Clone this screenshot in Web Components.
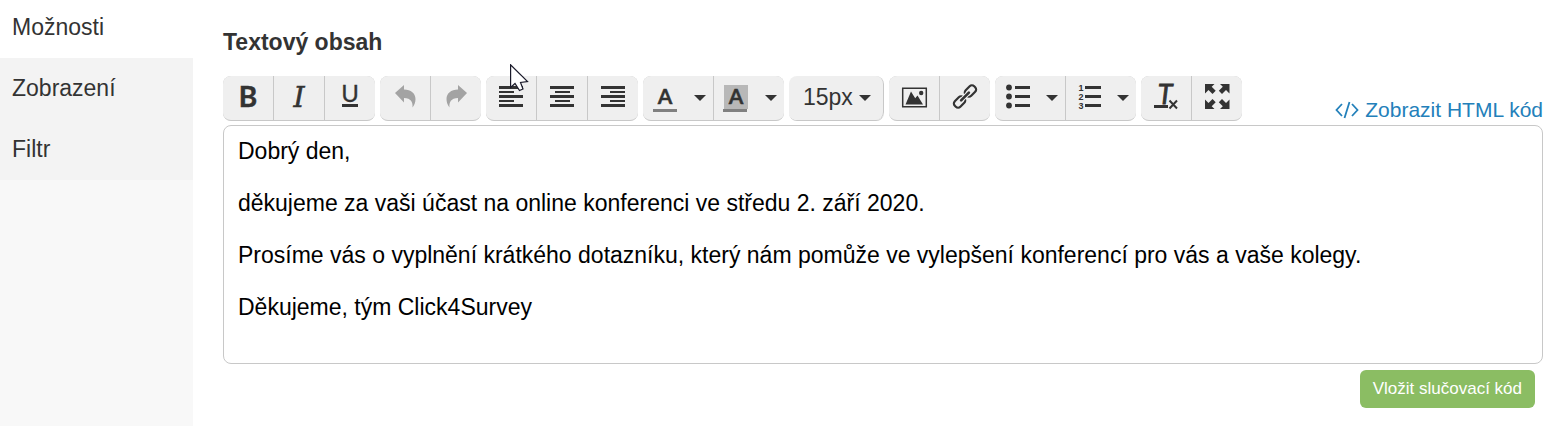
<!DOCTYPE html>
<html lang="cs">
<head>
<meta charset="utf-8">
<meta name="viewport" content="width=device-width, initial-scale=1">
<title>Textový obsah</title>
<style>
    body {
        margin: 0;
        background: #fff;
        color: #333;
        font-family: "Liberation Sans", Arial, sans-serif;
        font-size: 23px;
    }
</style>
</head>
<body>
<survey-settings>
    <side-menu slot="menu">
        <side-item active>Možnosti</side-item>
        <side-item>Zobrazení</side-item>
        <side-item>Filtr</side-item>
    </side-menu>
    <text-editor label="Textový obsah">
        <editor-toolbar slot="toolbar">
            <tool-group>
                <tool-button icon="bold" label="Tučné"></tool-button>
                <tool-button icon="italic" label="Kurzíva"></tool-button>
                <tool-button icon="underline" label="Podtržené"></tool-button>
            </tool-group>
            <tool-group>
                <tool-button icon="undo" label="Zpět" muted></tool-button>
                <tool-button icon="redo" label="Znovu" muted></tool-button>
            </tool-group>
            <tool-group>
                <tool-button icon="left" label="Zarovnat vlevo"></tool-button>
                <tool-button icon="center" label="Zarovnat na střed"></tool-button>
                <tool-button icon="right" label="Zarovnat vpravo"></tool-button>
            </tool-group>
            <tool-group>
                <tool-button icon="color" label="Barva textu" menu></tool-button>
                <tool-button icon="background" label="Barva pozadí" menu></tool-button>
            </tool-group>
            <tool-group>
                <size-select></size-select>
            </tool-group>
            <tool-group>
                <tool-button icon="image" label="Obrázek"></tool-button>
                <tool-button icon="link" label="Odkaz"></tool-button>
            </tool-group>
            <tool-group>
                <tool-button icon="bullets" label="Odrážky" menu></tool-button>
                <tool-button icon="numbers" label="Číslování" menu></tool-button>
            </tool-group>
            <tool-group>
                <tool-button icon="clear" label="Vymazat formát"></tool-button>
                <tool-button icon="expand" label="Celá obrazovka"></tool-button>
            </tool-group>
        </editor-toolbar>
        <code-link slot="code">Zobrazit HTML kód</code-link>
        <p>Dobrý den,</p>
        <p>děkujeme za vaši účast na online konferenci ve středu 2. září 2020.</p>
        <p>Prosíme vás o vyplnění krátkého dotazníku, který nám pomůže ve vylepšení konferencí pro vás a vaše kolegy.</p>
        <p>Děkujeme, tým Click4Survey</p>
        <action-button slot="action">Vložit slučovací kód</action-button>
    </text-editor>
    <mouse-pointer slot="overlay"></mouse-pointer>
</survey-settings>

<script>
const ICONS = {
    bold: `<text x="15" y="25" text-anchor="middle" font-family="Lato" font-weight="700" font-size="28" stroke="currentColor" stroke-width=".5">B</text>`,
    italic: `<text x="15" y="25" text-anchor="middle" font-family="DejaVu Serif" font-style="italic" font-size="28" stroke="currentColor" stroke-width=".6">I</text>`,
    underline: `<text x="15" y="20" text-anchor="middle" font-family="Lato" font-size="24" stroke="currentColor" stroke-width=".3">U</text><path d="M7 22h16v3H7z"/>`,
    undo: `<path d="M5 11 14 3v4.500c7 0 11.500 4 11.500 9.500 0 3-1 6-3 8.500C23 20 21 16.300 14 16v4.500z"/>`,
    redo: `<path d="M26 11 17 3v4.500c-7 0-11.500 4-11.500 9.500 0 3 1 6 3 8.500C8 20 10 16.300 17 16v4.500z"/>`,
    left: `<path d="M3 4h24v3H3zM3 9h15v2H3zM3 13h24v3H3zM3 18h15v2H3zM3 22h24v3H3z"/>`,
    center: `<path d="M3 4h24v3H3zM8 9h15v2H8zM3 13h24v3H3zM8 18h15v2H8zM3 22h24v3H3z"/>`,
    right: `<path d="M3 4h24v3H3zM12 9h15v2H12zM3 13h24v3H3zM12 18h15v2H12zM3 22h24v3H3z"/>`,
    color: `<text x="15" y="22" text-anchor="middle" font-family="Lato" font-weight="700" font-size="21" stroke="currentColor" stroke-width=".4">A</text><path fill="#808080" d="M3 27h24v3H3z"/>`,
    background: `<path fill="#b8b8b8" d="M3 3h24v24H3z"/><text x="15" y="22" text-anchor="middle" font-family="Lato" font-weight="700" font-size="21" stroke="currentColor" stroke-width=".4">A</text><path fill="#808080" d="M2 27h24v3H2z"/>`,
    image: `<path fill="none" stroke="currentColor" stroke-width="1.5" d="M3.7 6.2h23.6v18.6H3.7z"/><path d="M6.5 22.5 12 9.500l4.200 6.700 2.300-2.700 5.500 9z"/><circle cx="22.2" cy="11" r="2.2"/>`,
    link: `<g fill="none" stroke="currentColor" stroke-width="2.2" transform="rotate(-45 15 14.5)"><rect x="1.3" y="10.6" width="12" height="7.8" rx="3.2"/><rect x="16.7" y="10.6" width="12" height="7.8" rx="3.2"/><path d="M10 14.500h10" stroke="#efefef" stroke-width="4.600"/><path d="M9.500 14.500h11" stroke-width="2.600" stroke-linecap="round"/></g>`,
    bullets: `<circle cx="7" cy="5.5" r="2.9"/><circle cx="7" cy="14.5" r="2.9"/><circle cx="7" cy="23.5" r="2.9"/><path d="M13 4h15v3H13zM13 13h15v3H13zM13 22h15v3H13z"/>`,
    numbers: `<g font-family="Liberation Sans" font-weight="700" font-size="9" text-anchor="middle"><text x="8" y="9">1</text><text x="8" y="18">2</text><text x="8" y="27">3</text></g><path d="M12 4h16v3H12zM12 13h16v3H12zM12 22h16v3H12z"/>`,
    clear: `<text x="14" y="22" text-anchor="middle" font-family="Lato" font-style="italic" font-size="27" stroke="currentColor" stroke-width=".8">T</text><path d="M3 23h14v3H3z"/><path fill="none" stroke="currentColor" stroke-width="2" d="m18.500 18.500 7.500 8M26 18.500l-7.500 8"/>`,
    expand: `<path d="M3 2h9.500L9.700 4.800l4 4-3.200 3.200-4-4L3 11.500z"/><path d="M27.500 2H18l2.800 2.800-4 4L20 12l4-4 3.500 3.500z"/><path d="M3 27h9.500l-2.800-2.800 4-4-3.200-3.200-4 4L3 17.500z"/><path d="M27.500 27H18l2.800-2.800-4-4L20 17l4 4 3.500-3.500z"/>`
};

class SurveySettings extends HTMLElement {
    connectedCallback() {
        this.attachShadow({ mode: 'open' });
        this.shadowRoot.innerHTML = `
            <style>
                :host {
                    display: flex;
                    position: relative;
                    min-height: 100vh;
                    overflow: hidden;
                }
            </style>
            <slot name="menu"></slot>
            <slot></slot>
            <slot name="overlay"></slot>
        `;
    }
}
customElements.define('survey-settings', SurveySettings);

class SideMenu extends HTMLElement {
    connectedCallback() {
        this.attachShadow({ mode: 'open' });
        this.shadowRoot.innerHTML = `
            <style>
                :host {
                    display: block;
                    flex: 0 0 193px;
                    background: #f8f8f8;
                }
                nav {
                    display: flex;
                    flex-direction: column;
                    margin-top: -3px;
                }
            </style>
            <nav><slot></slot></nav>
        `;
    }
}
customElements.define('side-menu', SideMenu);

class SideItem extends HTMLElement {
    connectedCallback() {
        this.attachShadow({ mode: 'open' });
        this.shadowRoot.innerHTML = `
            <style>
                :host {
                    display: block;
                    background: #f3f3f3;
                }
                :host([active]) {
                    background: #fff;
                }
                a {
                    display: block;
                    padding: 15px 12px 16px;
                    line-height: 30px;
                    color: #333;
                    text-decoration: none;
                }
            </style>
            <a href="#"><slot></slot></a>
        `;
    }
}
customElements.define('side-item', SideItem);

class TextEditor extends HTMLElement {
    connectedCallback() {
        this.attachShadow({ mode: 'open' });
        this.shadowRoot.innerHTML = `
            <style>
                :host {
                    display: block;
                    flex: 1;
                    min-width: 0;
                    padding: 28px 25px 16px 30px;
                }
                .label {
                    display: block;
                    line-height: 28px;
                    font-weight: bold;
                }
                .bar {
                    display: flex;
                    justify-content: space-between;
                    align-items: flex-end;
                    margin: 20px 0 4px;
                }
                .content {
                    box-sizing: border-box;
                    min-height: 239px;
                    padding: 10px 14px;
                    border: 1px solid #c8c8c8;
                    border-radius: 8px;
                    color: #000;
                    line-height: 30px;
                    outline: none;
                }
                ::slotted(p) {
                    margin: 0 0 22px;
                }
                .actions {
                    display: flex;
                    justify-content: flex-end;
                    padding: 6px 8px 0;
                }
            </style>
            <span class="label" id="label">${this.getAttribute('label')}</span>
            <div class="bar">
                <slot name="toolbar"></slot>
                <slot name="code"></slot>
            </div>
            <div class="content" contenteditable="true" spellcheck="false" role="textbox" aria-multiline="true" aria-labelledby="label"><slot></slot></div>
            <div class="actions"><slot name="action"></slot></div>
        `;
    }
}
customElements.define('text-editor', TextEditor);

class EditorToolbar extends HTMLElement {
    connectedCallback() {
        this.attachShadow({ mode: 'open' });
        this.shadowRoot.innerHTML = `
            <style>
                :host {
                    display: flex;
                    flex-wrap: wrap;
                    gap: 5px;
                }
            </style>
            <slot></slot>
        `;
    }
}
customElements.define('editor-toolbar', EditorToolbar);

class ToolGroup extends HTMLElement {
    connectedCallback() {
        this.attachShadow({ mode: 'open' });
        this.shadowRoot.innerHTML = `
            <style>
                :host {
                    display: flex;
                    gap: 1px;
                    box-sizing: border-box;
                    height: 45px;
                    border-bottom: 1px solid #c8c8c8;
                    border-radius: 8px;
                    background: #c8c8c8;
                    overflow: hidden;
                }
            </style>
            <slot></slot>
        `;
    }
}
customElements.define('tool-group', ToolGroup);

class ToolButton extends HTMLElement {
    connectedCallback() {
        const menu = this.hasAttribute('menu');
        this.attachShadow({ mode: 'open' });
        this.shadowRoot.innerHTML = `
            <style>
                :host {
                    display: flex;
                    background: #efefef;
                    color: #333;
                }
                :host([muted]) {
                    color: #a3a3a3;
                }
                button {
                    display: flex;
                    align-items: center;
                    gap: 14px;
                    padding: 0 10px;
                    border: 0;
                    background: none;
                    color: inherit;
                    cursor: pointer;
                }
                :host([menu]) button {
                    padding: 0 7px;
                }
                svg {
                    display: block;
                    fill: currentColor;
                }
                .icon {
                    margin-bottom: 2px;
                    overflow: visible;
                }
            </style>
            <button type="button" aria-label="${this.getAttribute('label')}">
                <svg class="icon" width="30" height="30" viewBox="0 0 30 30">${ICONS[this.getAttribute('icon')]}</svg>
                ${menu ? '<svg width="12" height="6" viewBox="0 0 12 6"><path d="M0 0h12L6 6z"/></svg>' : ''}
            </button>
        `;
    }
}
customElements.define('tool-button', ToolButton);

class SizeSelect extends HTMLElement {
    connectedCallback() {
        this.attachShadow({ mode: 'open' });
        this.shadowRoot.innerHTML = `
            <style>
                :host {
                    display: grid;
                    align-items: center;
                    background: #efefef;
                }
                select, svg {
                    grid-area: 1 / 1;
                }
                select {
                    appearance: none;
                    height: 44px;
                    padding: 0 30px 2px 14px;
                    border: 0;
                    border-right: 1px solid #c8c8c8;
                    border-radius: 8px;
                    background: none;
                    color: #333;
                    font: inherit;
                }
                svg {
                    justify-self: end;
                    margin-right: 13px;
                    fill: #333;
                    pointer-events: none;
                }
            </style>
            <select aria-label="Velikost písma"><option>15px</option></select>
            <svg width="12" height="6" viewBox="0 0 12 6"><path d="M0 0h12L6 6z"/></svg>
        `;
    }
}
customElements.define('size-select', SizeSelect);

class CodeLink extends HTMLElement {
    connectedCallback() {
        this.attachShadow({ mode: 'open' });
        this.shadowRoot.innerHTML = `
            <style>
                :host {
                    display: block;
                    flex: none;
                }
                a {
                    display: flex;
                    align-items: center;
                    gap: 6px;
                    line-height: 22px;
                    font-size: 21px;
                    color: #2380ba;
                    text-decoration: none;
                }
            </style>
            <a href="#">
                <svg width="24" height="18" viewBox="0 0 24 18" fill="none" stroke="currentColor" stroke-width="1.8"><path d="M7 3 1.500 9 7 15M17 3l5.500 6-5.500 6M14.500 1l-5 16"/></svg>
                <slot></slot>
            </a>
        `;
    }
}
customElements.define('code-link', CodeLink);

class ActionButton extends HTMLElement {
    connectedCallback() {
        this.attachShadow({ mode: 'open' });
        this.shadowRoot.innerHTML = `
            <style>
                :host {
                    display: block;
                }
                button {
                    display: block;
                    padding: 9px 13px;
                    border: 0;
                    border-radius: 6px;
                    background: #8bbd63;
                    color: #fff;
                    font-family: inherit;
                    font-size: 17px;
                    line-height: 20px;
                    cursor: pointer;
                }
            </style>
            <button type="button"><slot></slot></button>
        `;
    }
}
customElements.define('action-button', ActionButton);

class MousePointer extends HTMLElement {
    connectedCallback() {
        this.attachShadow({ mode: 'open' });
        this.shadowRoot.innerHTML = `
            <style>
                :host {
                    position: absolute;
                    left: 510px;
                    top: 64px;
                    pointer-events: none;
                }
                svg {
                    display: block;
                }
            </style>
            <svg width="20" height="28" viewBox="0 0 20 28" fill="#fff" stroke="#1a1a2a" stroke-width="1.2"><path d="M.6.8v22.700L5 19.500l4.500 7 3.500-1.500-2.500-6.500 7-1z"/></svg>
        `;
    }
}
customElements.define('mouse-pointer', MousePointer);
</script>
</body>
</html>
